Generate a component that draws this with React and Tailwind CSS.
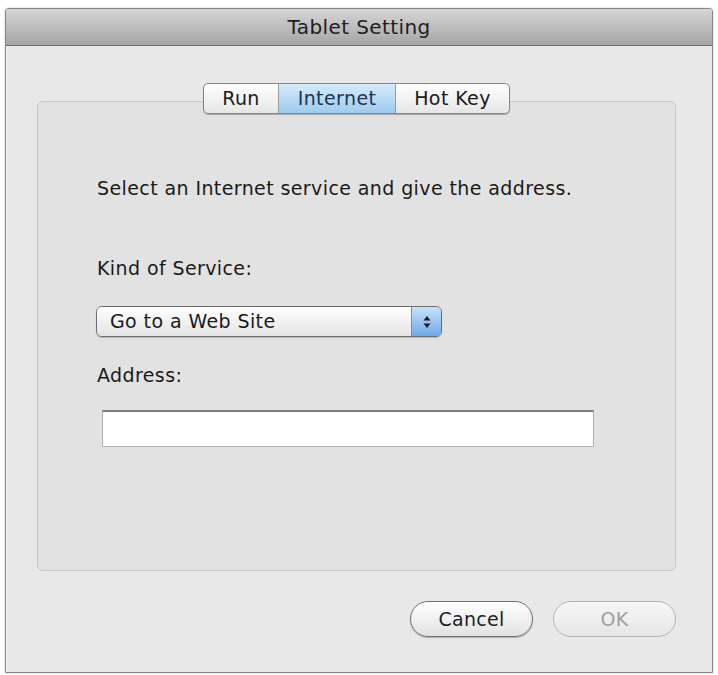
import React, { useState } from "react";

const tabs = [
  { label: "Run", w: "w-[74px]" },
  { label: "Internet", w: "w-[117px]" },
  { label: "Hot Key", w: "w-[114px]" },
];

const StepperIcon = () => (
  <svg width="10" height="16" viewBox="0 0 10 16">
    <path d="M5 2 L8.5 6.5 H1.5 Z" fill="#1b1b1b" />
    <path d="M5 14 L8.5 9.5 H1.5 Z" fill="#1b1b1b" />
  </svg>
);

const App = () => {
  const [active, setActive] = useState("Internet");
  const [address, setAddress] = useState("");

  return (
    <div
      className="w-[718px] h-[675px] bg-white overflow-hidden pt-[8px] pl-[5px] text-[#1a1a1a]"
      style={{ fontFamily: '"DejaVu Sans", "Liberation Sans", sans-serif' }}
    >
      {/* window */}
      <div className="w-[708px] h-[665px] flex flex-col border border-[#858585] rounded-t-[4px] bg-[#e8e8e8] shadow-[0_0_2px_rgba(0,0,0,0.25)]">
        {/* title bar */}
        <div className="h-[37px] shrink-0 border-b border-[#6f6f6f] bg-gradient-to-b from-[#d6d6d6] to-[#a5a5a5] rounded-t-[3px] flex items-center justify-center">
          <span className="text-[20px] tracking-[0.4px] text-[#1e1e1e] leading-none">
            Tablet Setting
          </span>
        </div>

        {/* body */}
        <div className="flex-1 flex flex-col pt-[37px] pl-[30px] border-l border-[#f6f6f6]">
          {/* tabs */}
          <div className="w-[639px] flex justify-center relative z-10">
            <div className="flex h-[31px] border border-[#858585] rounded-[5px] overflow-hidden shadow-[0_1px_1px_rgba(0,0,0,0.25)] bg-gradient-to-b from-white to-[#e6e6e6]">
              {tabs.map((t, i) => (
                <button
                  key={t.label}
                  onClick={() => setActive(t.label)}
                  className={`${t.w} h-full flex items-center justify-center text-[19px] tracking-[0.4px] ${
                    i > 0 ? "border-l border-[#9a9a9a]" : ""
                  } ${
                    active === t.label
                      ? "bg-gradient-to-b from-[#d4ebfb] to-[#9fcbee] text-[#1c3550]"
                      : "text-[#1a1a1a]"
                  }`}
                >
                  {t.label}
                </button>
              ))}
            </div>
          </div>

          {/* group box */}
          <div className="w-[639px] h-[470px] -mt-[13px] border border-[#c6c6c6] rounded-[6px] bg-[#e2e2e2] flex flex-col pl-[59px]">
            <p className="mt-[74px] text-[19px] leading-[24px] tracking-[0.4px]">
              Select an Internet service and give the address.
            </p>
            <p className="mt-[56px] text-[19px] leading-[24px] tracking-[0.4px]">
              Kind of Service:
            </p>

            {/* popup */}
            <div className="mt-[26px] -ml-[1px] w-[346px] h-[31px] flex border border-[#6e6e6e] rounded-[6px] overflow-hidden shadow-[0_1px_1px_rgba(0,0,0,0.2)]">
              <div className="flex-1 flex items-center pl-[13px] bg-gradient-to-b from-white to-[#e4e4e4] text-[19px] tracking-[0.4px] text-[#1a1a1a]">
                Go to a Web Site
              </div>
              <div className="w-[30px] flex items-center justify-center border-l border-[#7a8fa8] bg-gradient-to-b from-[#c7e2fa] to-[#6fa9e6]">
                <StepperIcon />
              </div>
            </div>

            <p className="mt-[26px] text-[19px] leading-[24px] tracking-[0.4px]">
              Address:
            </p>
            <input
              value={address}
              onChange={(e) => setAddress(e.target.value)}
              className="mt-[23px] ml-[5px] w-[492px] h-[37px] bg-white border border-[#b0b0b0] border-t-[#7e7e7e] border-t-2 outline-none px-2 text-[17px]"
            />
          </div>

          {/* buttons */}
          <div className="w-[639px] flex justify-end gap-[20px] mt-[30px]">
            <button className="w-[123px] h-[36px] rounded-full border border-[#6f6f6f] bg-gradient-to-b from-white to-[#e2e2e2] shadow-[0_1px_1px_rgba(0,0,0,0.25)] text-[19px] tracking-[0.3px] text-[#1e1e1e]">
              Cancel
            </button>
            <button
              disabled
              className="w-[123px] h-[36px] rounded-full border border-[#b4b4b4] bg-gradient-to-b from-[#f7f7f7] to-[#e6e6e6] text-[19px] tracking-[0.3px] text-[#9e9e9e]"
            >
              OK
            </button>
          </div>
        </div>
      </div>
    </div>
  );
};

export default App;
